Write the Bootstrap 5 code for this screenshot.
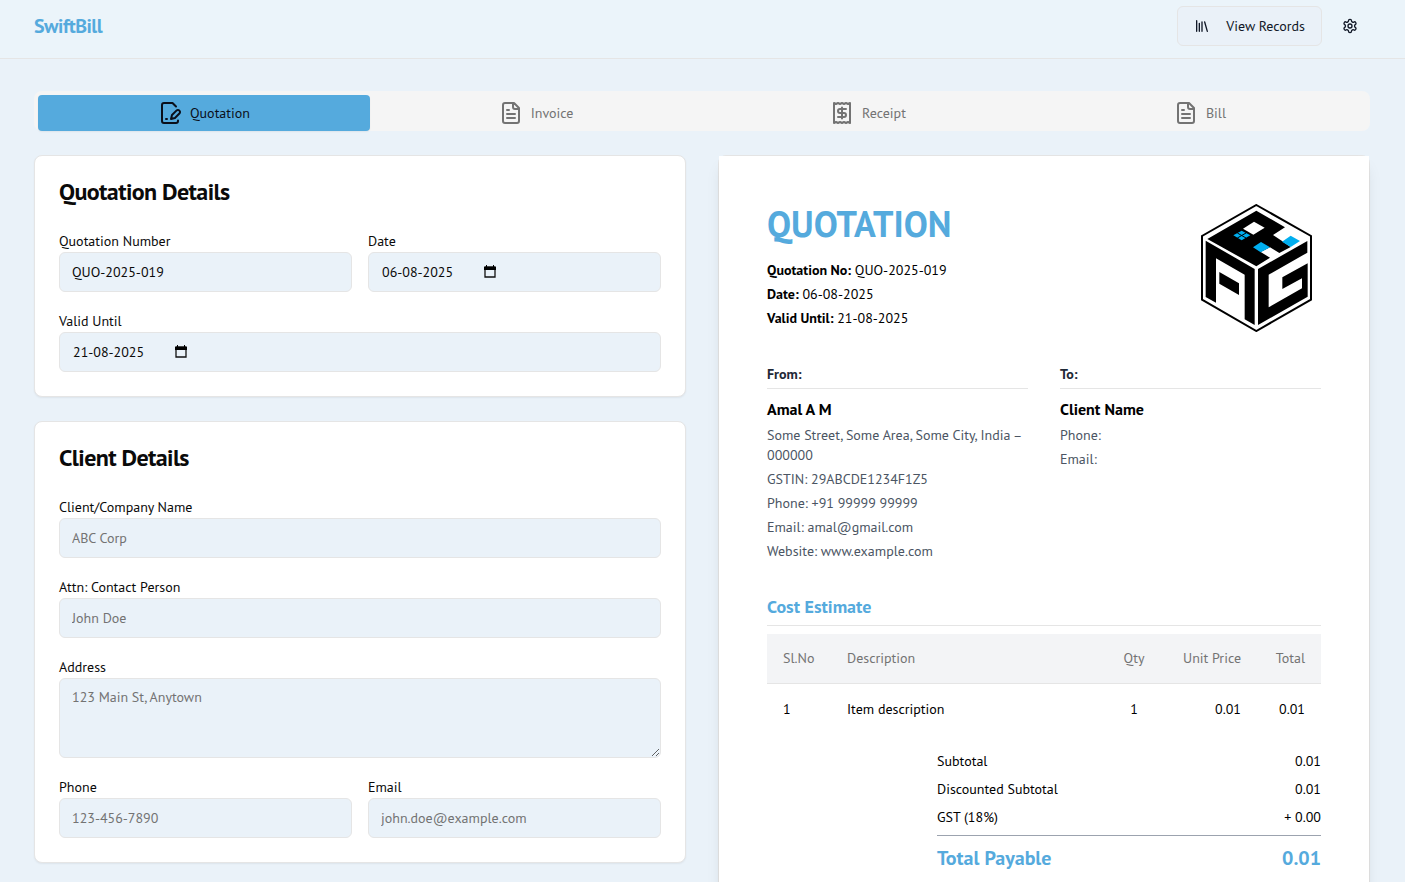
<!DOCTYPE html>
<html lang="en">
<head>
<meta charset="utf-8">
<meta name="viewport" content="width=device-width, initial-scale=1">
<title>SwiftBill</title>
<link href="https://cdn.jsdelivr.net/npm/bootstrap@5.3.0/dist/css/bootstrap.min.css" rel="stylesheet">
<style>
  :root { --brand: #55aadd; --page: #eaf2f9; --line: #e5e5e5; --muted: #737373; }
  body { font-family: "PT Sans", Lato, "Open Sans", sans-serif; font-size: 14px; line-height: 20px; color: #0a0a0a; background: var(--page); }
  .shell { max-width: 1401px; padding-left: 32px; padding-right: 33px; }
  .topbar { background: #ebf4fa; border-bottom: 1px solid var(--line); padding: 6px 0 12px; }
  .brand-name { color: var(--brand); font-size: 20px; line-height: 28px; font-weight: 700; letter-spacing: -0.025em; }
  .topbar .btn { height: 40px; font-size: 14px; line-height: 20px; color: #111827; border-radius: 6px; }
  .btn-records { border: 1px solid var(--line); background: #eaf1f8; padding: 0 16px; gap: 16px; }
  .btn-gear { width: 40px; padding: 0; border: 0; }
  .ico { fill: none; stroke: currentColor; stroke-width: 2; stroke-linecap: round; stroke-linejoin: round; flex: none; }
  .doc-tabs { background: #f5f5f5; border-radius: 8px; padding: 4px 4px 0; margin: 32px 0 24px; }
  .doc-tabs .nav-link { height: 36px; padding: 0; color: var(--muted); border-radius: 4px; line-height: 20px; }
  .doc-tabs .nav-link.active { background: var(--brand); color: #0a0f1a; box-shadow: 0 1px 2px rgba(0,0,0,.06); }
  .columns { display: grid; grid-template-columns: 1fr 1fr; gap: 32px; }
  .panel { background: #fff; border: 1px solid var(--line); border-radius: 8px; padding: 24px; box-shadow: 0 1px 2px rgba(0,0,0,.06); }
  .panel h2 { font-size: 24px; line-height: 24px; font-weight: 700; letter-spacing: -0.025em; margin: 0 0 28px; }
  .fields { display: grid; grid-template-columns: 1fr 1fr; gap: 20px 16px; }
  .wide { grid-column: 1 / -1; }
  .fields label { display: block; line-height: 18px; margin-bottom: 2px; }
  .fields .form-control { height: 40px; padding: 8px 12px; font-size: 14px; line-height: 20px; color: #0a0a0a; background: var(--page); border: 1px solid var(--line); border-radius: 6px; }
  .fields textarea.form-control { height: 80px; }
  .fields .form-control::placeholder { color: var(--muted); }
  .date-box input { border: 0; padding: 0 0 0 1px; background: none; width: 103px; color: inherit; }
  .date-box button { border: 0; padding: 0; background: none; width: 12px; height: 14px; display: flex; }
  .preview { border: 1px solid var(--line); border-radius: 8px; }
  .sheet { background: #fff; padding: 48px; min-height: 900px; color: #000; box-shadow: 0 10px 15px -3px rgba(0,0,0,.1), 0 4px 6px -4px rgba(0,0,0,.1); }
  .sheet h1 { font-size: 36px; line-height: 40px; font-weight: 700; color: var(--brand); margin: 0 0 16px; }
  .sheet p { margin: 0 0 4px; }
  .parties { display: grid; grid-template-columns: 1fr 1fr; gap: 32px; margin-top: 32px; color: #4b5563; }
  .parties h2 { font-size: 14px; line-height: 20px; font-weight: 700; color: #1f2937; border-bottom: 1px solid var(--line); padding-bottom: 4px; margin: 0 0 8px; }
  .parties h3 { font-size: 16px; line-height: 24px; font-weight: 700; color: #000; margin: 0 0 4px; }
  .sheet .estimate-title { font-size: 18px; line-height: 28px; font-weight: 700; color: var(--brand); border-bottom: 1px solid var(--line); padding-bottom: 4px; margin: 28px 0 8px; }
  .items { width: 100%; table-layout: fixed; }
  .items th { font-weight: 400; color: var(--muted); background: #f3f4f6; height: 49px; border-bottom: 1px solid var(--line); padding: 0 16px; white-space: nowrap; }
  .items td { height: 52px; padding: 0 16px; }
  .c-sl, .c-qty, .c-total { width: 64px; }
  .c-unit { width: 91px; }
  .items .c-sl, .items .c-qty { padding-right: 0; }
  .items .c-qty { padding-left: 0; }
  .items .c-total, .items .c-unit { padding-left: 0; }
  .totals { width: 384px; max-width: 100%; margin: 16px 0 0 auto; }
  .totals .line-item { margin-bottom: 8px; }
  .grand { border-top: 1px solid #9ca3af; color: var(--brand); font-size: 20px; line-height: 28px; font-weight: 700; padding-top: 8px; }
</style>
</head>
<body class="vh-100 overflow-hidden">
<header class="topbar">
  <div class="container-fluid shell d-flex align-items-center justify-content-between">
    <a href="#" class="brand-name text-decoration-none">SwiftBill</a>
    <div class="d-flex gap-2">
      <button type="button" class="btn btn-records d-flex align-items-center">
        <svg class="ico" width="16" height="16" viewBox="0 0 24 24" aria-hidden="true"><path d="m16 6 4 14M12 6v14M8 8v12M4 4v16"/></svg>
        View Records
      </button>
      <button type="button" class="btn btn-gear d-flex align-items-center justify-content-center" aria-label="Settings">
        <svg class="ico" width="16" height="16" viewBox="0 0 24 24" aria-hidden="true"><path d="M12.22 2h-.44a2 2 0 0 0-2 2v.18a2 2 0 0 1-1 1.73l-.43.25a2 2 0 0 1-2 0l-.15-.08a2 2 0 0 0-2.73.73l-.22.38a2 2 0 0 0 .73 2.73l.15.1a2 2 0 0 1 1 1.72v.51a2 2 0 0 1-1 1.74l-.15.09a2 2 0 0 0-.73 2.73l.22.38a2 2 0 0 0 2.73.73l.15-.08a2 2 0 0 1 2 0l.43.25a2 2 0 0 1 1 1.73V20a2 2 0 0 0 2 2h.44a2 2 0 0 0 2-2v-.18a2 2 0 0 1 1-1.73l.43-.25a2 2 0 0 1 2 0l.15.08a2 2 0 0 0 2.73-.73l.22-.39a2 2 0 0 0-.73-2.73l-.15-.08a2 2 0 0 1-1-1.74v-.5a2 2 0 0 1 1-1.74l.15-.09a2 2 0 0 0 .73-2.73l-.22-.38a2 2 0 0 0-2.73-.73l-.15.08a2 2 0 0 1-2 0l-.43-.25a2 2 0 0 1-1-1.73V4a2 2 0 0 0-2-2z"/><circle cx="12" cy="12" r="3"/></svg>
      </button>
    </div>
  </div>
</header>

<main class="container-fluid shell">
  <nav class="nav nav-pills nav-justified flex-nowrap doc-tabs" aria-label="Document type">
    <button type="button" class="nav-link active w-100 d-flex align-items-center justify-content-center gap-2">
      <svg class="ico" width="24" height="24" viewBox="0 0 24 24" aria-hidden="true"><path d="M20 19.500v.5a2 2 0 0 1-2 2H6a2 2 0 0 1-2-2V4a2 2 0 0 1 2-2h8.500L18 5.500M8 18h1M18.420 9.610a2.100 2.100 0 1 1 2.970 2.970L16.950 17 13 18l.99-3.950 4.430-4.440Z"/></svg>
      Quotation
    </button>
    <button type="button" class="nav-link w-100 d-flex align-items-center justify-content-center gap-2">
      <svg class="ico" width="24" height="24" viewBox="0 0 24 24" aria-hidden="true"><path d="M15 2H6a2 2 0 0 0-2 2v16a2 2 0 0 0 2 2h12a2 2 0 0 0 2-2V7ZM14 2v4a2 2 0 0 0 2 2h4M10 9H8M16 13H8M16 17H8"/></svg>
      Invoice
    </button>
    <button type="button" class="nav-link w-100 d-flex align-items-center justify-content-center gap-2">
      <svg class="ico" width="24" height="24" viewBox="0 0 24 24" aria-hidden="true"><path d="M4 2v20l2-1 2 1 2-1 2 1 2-1 2 1 2-1 2 1V2l-2 1-2-1-2 1-2-1-2 1-2-1-2 1ZM16 8h-6a2 2 0 1 0 0 4h4a2 2 0 1 1 0 4H8M12 17.500v-11"/></svg>
      Receipt
    </button>
    <button type="button" class="nav-link w-100 d-flex align-items-center justify-content-center gap-2">
      <svg class="ico" width="24" height="24" viewBox="0 0 24 24" aria-hidden="true"><path d="M15 2H6a2 2 0 0 0-2 2v16a2 2 0 0 0 2 2h12a2 2 0 0 0 2-2V7ZM14 2v4a2 2 0 0 0 2 2h4M10 9H8M16 13H8M16 17H8"/></svg>
      Bill
    </button>
  </nav>

  <div class="columns">
    <form class="d-flex flex-column gap-4">
      <section class="panel">
        <h2>Quotation Details</h2>
        <div class="fields">
          <div><label for="qno">Quotation Number</label><input id="qno" class="form-control" type="text" value="QUO-2025-019"></div>
          <div><label for="qdate">Date</label>
            <div class="form-control date-box d-flex align-items-center">
              <input id="qdate" type="text" inputmode="numeric" value="06-08-2025">
              <button type="button" aria-label="Choose date"><svg width="12" height="14" viewBox="0 0 12 14"><path d="M1 2h10v10H1z" fill="none" stroke="#111" stroke-width="1.300"/><path d="M0 2h12v3H0zM2 0h1v2H2zM9 0h1v2H9z"/></svg></button>
            </div>
          </div>
          <div class="wide"><label for="qvalid">Valid Until</label>
            <div class="form-control date-box d-flex align-items-center">
              <input id="qvalid" type="text" inputmode="numeric" value="21-08-2025">
              <button type="button" aria-label="Choose expiry date"><svg width="12" height="14" viewBox="0 0 12 14"><path d="M1 2h10v10H1z" fill="none" stroke="#111" stroke-width="1.300"/><path d="M0 2h12v3H0zM2 0h1v2H2zM9 0h1v2H9z"/></svg></button>
            </div>
          </div>
        </div>
      </section>
      <section class="panel">
        <h2>Client Details</h2>
        <div class="fields">
          <div class="wide"><label for="cname">Client/Company Name</label><input id="cname" class="form-control" type="text" placeholder="ABC Corp"></div>
          <div class="wide"><label for="attn">Attn: Contact Person</label><input id="attn" class="form-control" type="text" placeholder="John Doe"></div>
          <div class="wide"><label for="addr">Address</label><textarea id="addr" class="form-control d-block" placeholder="123 Main St, Anytown"></textarea></div>
          <div><label for="phone">Phone</label><input id="phone" class="form-control" type="tel" placeholder="123-456-7890"></div>
          <div><label for="email">Email</label><input id="email" class="form-control" type="email" placeholder="john.doe@example.com"></div>
        </div>
      </section>
    </form>

    <div class="preview">
      <article class="sheet">
        <div class="d-flex justify-content-between align-items-start">
          <div>
            <h1>QUOTATION</h1>
            <p><b>Quotation No:</b> QUO-2025-019</p>
            <p><b>Date:</b> 06-08-2025</p>
            <p class="mb-0"><b>Valid Until:</b> 21-08-2025</p>
          </div>
          <svg width="128" height="128" viewBox="9 27 384 384" role="img" aria-label="Company logo">
            <path d="M199 30 363 123V314L199 408 36 314V123Z" fill="#fff" stroke="#000" stroke-width="6"/>
            <path d="M52 132 199 47 285 97 249 120 275 137 302 156 268 174 240 157 212 171 240 188 199 214Z"/>
            <path d="M192 80 224 98 190 119 159 101Z" fill="#fff"/>
            <path d="M155 107 181 121 155 136 130 121ZM213 141 240 157 212 172 189 157ZM302 122 330 138 302 156 276 140Z" fill="#00aeef"/>
            <path d="M142 114 168 129M168 114 142 129" stroke="#000" stroke-width="3"/>
            <path d="M47 137 194 222V390L164 373V239L78 190V323L47 306ZM88 231 147 265V300L88 266Z"/>
            <path d="M204 222 352 138V173L236 239V337L336 280V250L277 282V247L353 205V305L204 390Z"/>
          </svg>
        </div>

        <div class="parties">
          <section>
            <h2>From:</h2>
            <h3>Amal A M</h3>
            <p>Some Street, Some Area, Some City, India – 000000</p>
            <p>GSTIN: 29ABCDE1234F1Z5</p>
            <p>Phone: +91 99999 99999</p>
            <p>Email: amal@gmail.com</p>
            <p>Website: www.example.com</p>
          </section>
          <section>
            <h2>To:</h2>
            <h3>Client Name</h3>
            <p>Phone:</p>
            <p>Email:</p>
          </section>
        </div>

        <h2 class="estimate-title">Cost Estimate</h2>
        <table class="items">
          <thead><tr><th class="c-sl">Sl.No</th><th>Description</th><th class="c-qty text-center">Qty</th><th class="c-unit text-end">Unit Price</th><th class="c-total text-end">Total</th></tr></thead>
          <tbody><tr><td class="c-sl">1</td><td>Item description</td><td class="c-qty text-center">1</td><td class="c-unit text-end">0.01</td><td class="c-total text-end">0.01</td></tr></tbody>
        </table>
        <div class="totals">
          <div class="line-item d-flex justify-content-between"><span>Subtotal</span><span>0.01</span></div>
          <div class="line-item d-flex justify-content-between"><span>Discounted Subtotal</span><span>0.01</span></div>
          <div class="line-item d-flex justify-content-between"><span>GST (18%)</span><span>+ 0.00</span></div>
          <div class="grand d-flex justify-content-between"><span>Total Payable</span><span>0.01</span></div>
        </div>
      </article>
    </div>
  </div>
</main>
<script src="https://cdn.jsdelivr.net/npm/bootstrap@5.3.0/dist/js/bootstrap.bundle.min.js"></script>
</body>
</html>
